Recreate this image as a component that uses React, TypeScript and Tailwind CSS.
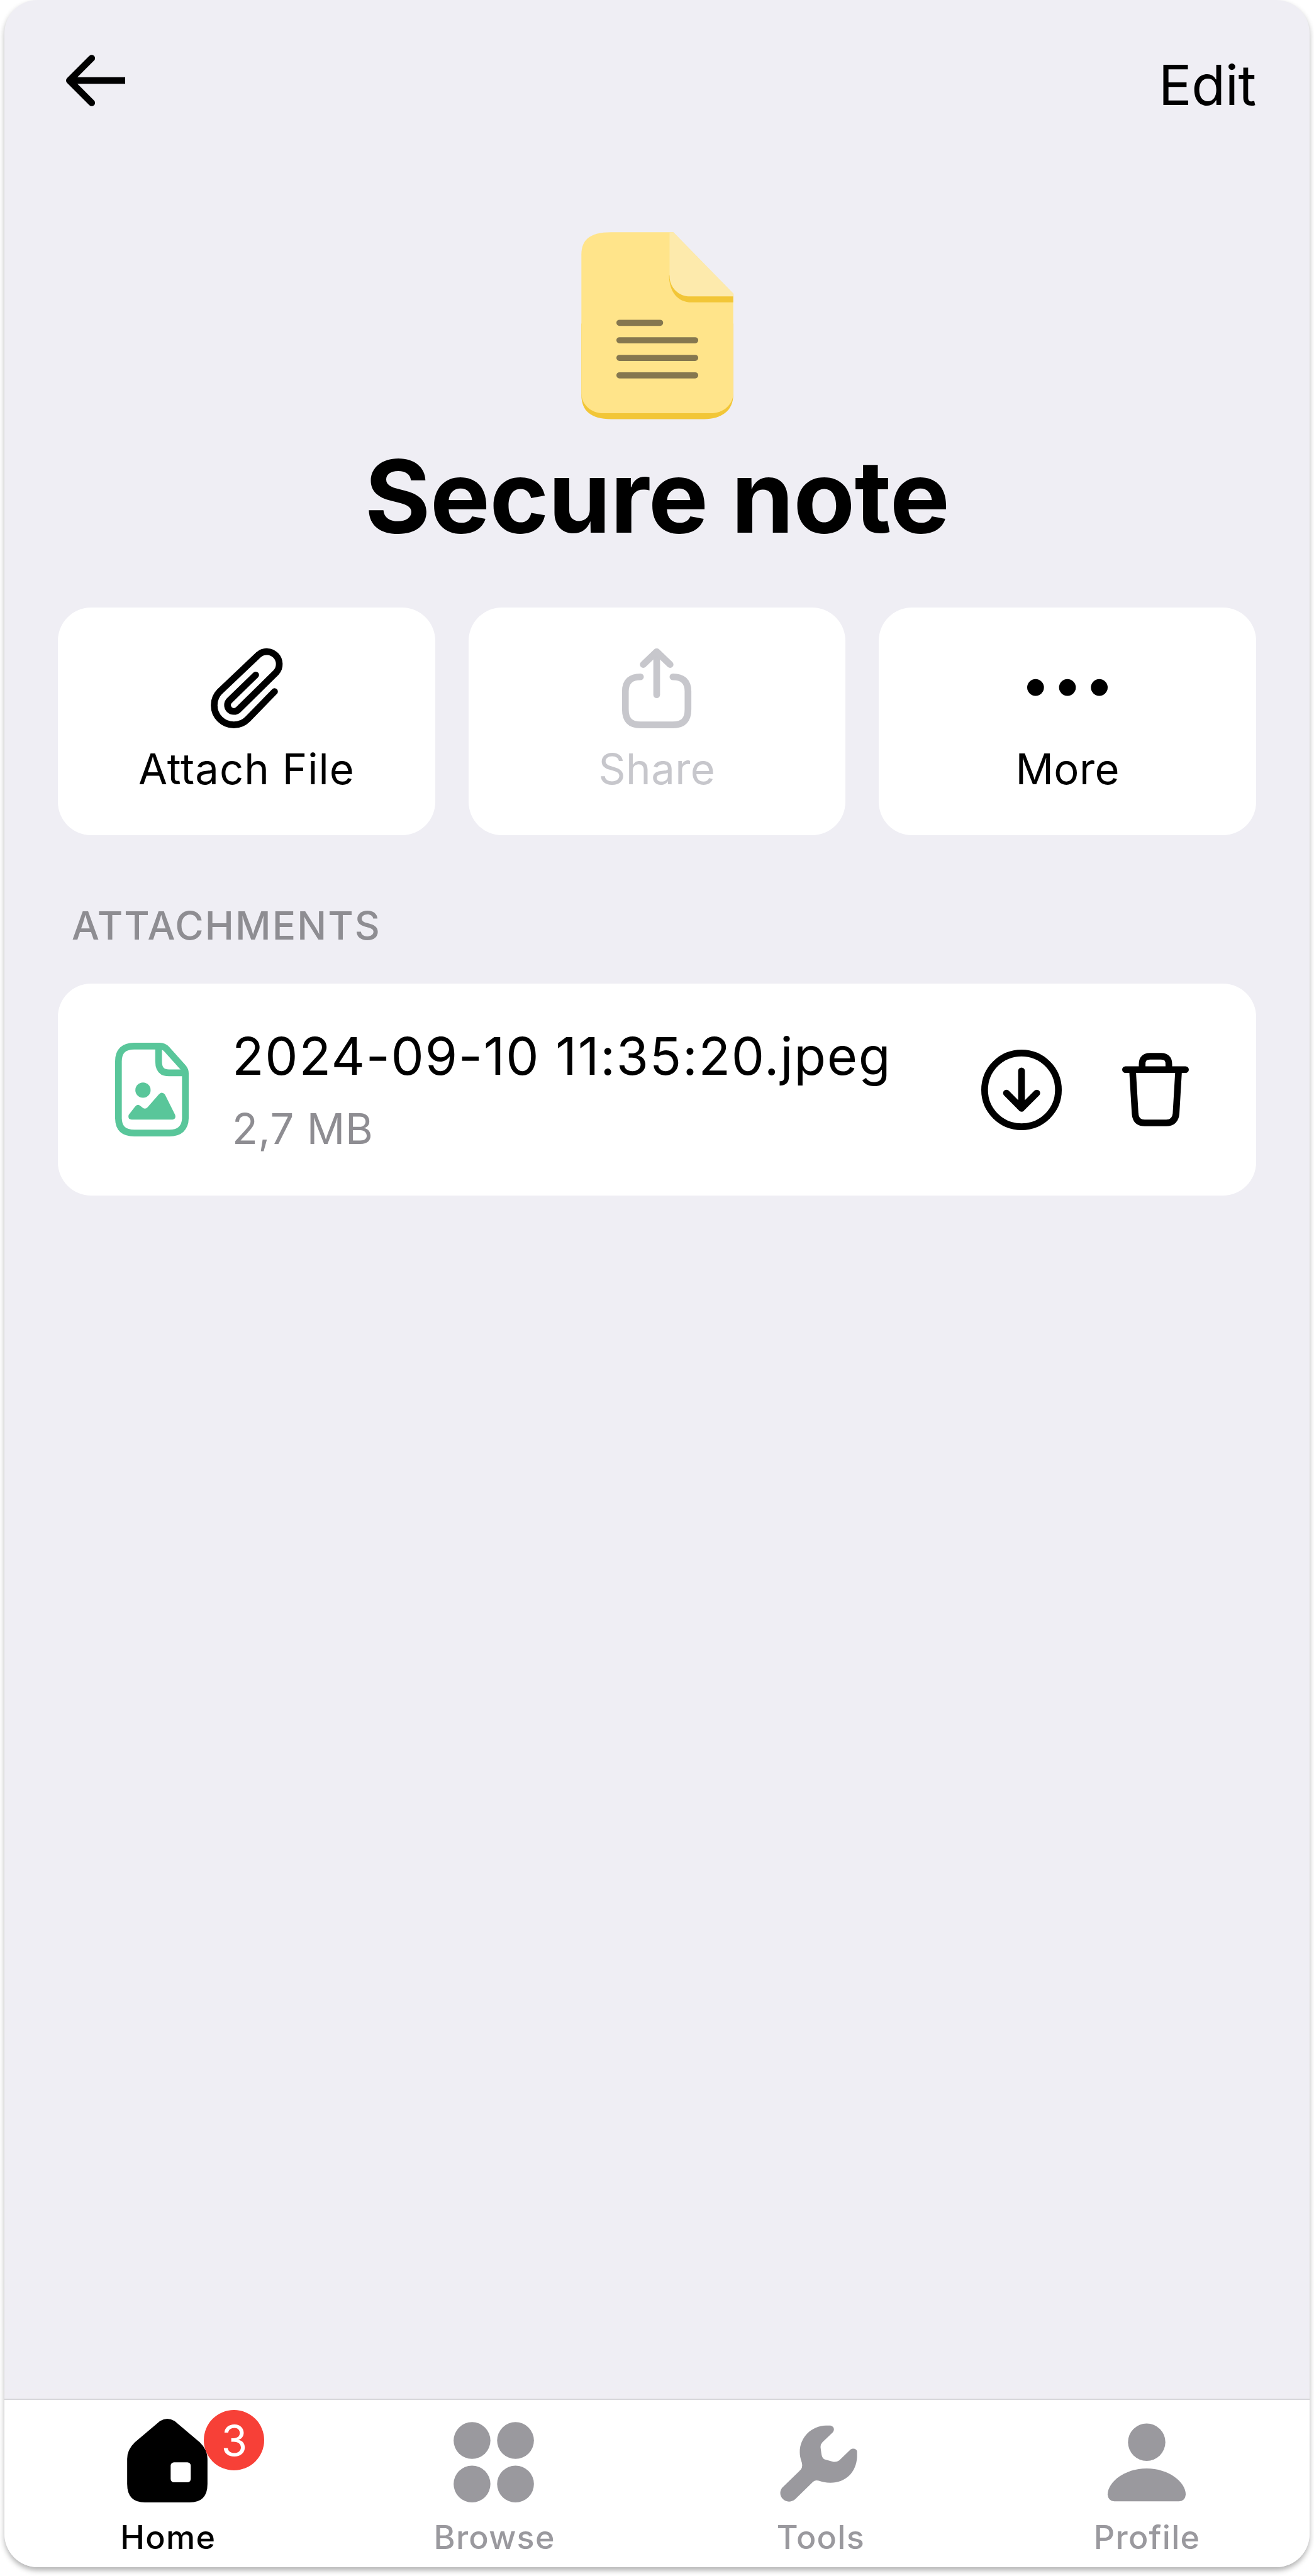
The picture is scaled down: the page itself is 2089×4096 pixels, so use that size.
import React from 'react';

type IconProps = { className?: string };

function ArrowLeft({ className }: IconProps) {
  return (
    <svg viewBox="118 98 106 92" className={className} fill="none" stroke="currentColor" strokeWidth="12" strokeLinecap="round" strokeLinejoin="round">
      <path d="M164 104L124 144L164 184" />
      <path d="M126 144H224" strokeLinecap="butt" />
    </svg>
  );
}

function NoteIcon({ className }: IconProps) {
  return (
    <svg viewBox="124 108 820 1008" className={className}>
      <path d="M125 600V985C125 1070 175 1115 285 1115H785C880 1115 943 1070 943 985V600Z" fill="#f2c637" />
      <path d="M125 228C125 150 170 108 285 108H620L943 438V975C943 1035 892 1083 820 1083H245C175 1083 125 1035 125 975Z" fill="#ffe48a" />
      <path d="M597 340C598 425 640 486 720 486H943V440Z" fill="#f2c637" />
      <path d="M600 108H620L943 438V454H710C648 454 600 405 600 345Z" fill="#fdeaac" />
      <path d="M330 596H549M330 690H738M330 785H738M330 879H738" stroke="#85774f" strokeWidth="33" strokeLinecap="round" />
    </svg>
  );
}

function PaperclipIcon({ className }: IconProps) {
  return (
    <svg viewBox="57 66 432 432" className={className} fill="none" stroke="currentColor" strokeWidth="36" strokeLinecap="round" strokeLinejoin="round">
      <path d="M423 301L279 449A105 105 0 0 1 130 300L338 103A67 67 0 0 1 432 198L229 398A34 34 0 0 1 181 349L322 212" />
    </svg>
  );
}

function ShareIcon({ className }: IconProps) {
  return (
    <svg viewBox="1106 1162 144 144" className={className} fill="none" stroke="currentColor" strokeWidth="12" strokeLinecap="round" strokeLinejoin="round">
      <path d="M1178 1172V1246" />
      <path d="M1154 1192L1178 1169L1202 1192" />
      <path d="M1149 1214C1132 1214 1122 1222 1122 1240V1272C1122 1292 1131 1300 1149 1300H1207C1225 1300 1234 1292 1234 1272V1240C1234 1222 1224 1214 1207 1214" />
    </svg>
  );
}

function DotsIcon({ className }: IconProps) {
  return (
    <svg viewBox="0 0 144 144" className={className} fill="currentColor">
      <circle cx="15" cy="71" r="15" />
      <circle cx="72" cy="71" r="15" />
      <circle cx="129" cy="71" r="15" />
    </svg>
  );
}

function ImageFileIcon({ className }: IconProps) {
  return (
    <svg viewBox="48 60 396 504" className={className}>
      <g fill="none" stroke="currentColor" strokeWidth="36" strokeLinejoin="round">
        <path d="M66 160C66 105 95 78 150 78H288C306 78 316 84 326 95L413 192C422 202 426 210 426 224V464C426 520 394 546 340 546H152C95 546 66 520 66 464Z" />
        <path d="M282 80V160C282 202 300 222 338 222H426" />
      </g>
      <g fill="currentColor">
        <circle cx="198" cy="315" r="41" />
        <path d="M121 448L155 404Q169 386 184 400L198 411Q211 420 223 407L283 338Q300 320 316 338L371 448Q377 470 357 474H137Q115 472 121 448Z" />
      </g>
    </svg>
  );
}

function DownloadIcon({ className }: IconProps) {
  return (
    <svg viewBox="30 66 432 432" className={className} fill="none" stroke="currentColor" strokeWidth="36" strokeLinecap="round" strokeLinejoin="round">
      <circle cx="246" cy="282" r="198" />
      <path d="M246 180V376M165 299L246 381L328 299" />
    </svg>
  );
}

function TrashIcon({ className }: IconProps) {
  return (
    <svg viewBox="786 84 360 396" className={className} fill="none" stroke="currentColor" strokeWidth="36" strokeLinecap="round" strokeLinejoin="round">
      <path d="M804 174H1128" />
      <path d="M894 172V145C894 116 908 102 936 102H996C1024 102 1038 116 1038 145V172" />
      <path d="M842 176L856 412C859 445 876 462 908 462H1024C1056 462 1074 445 1077 412L1091 176" />
    </svg>
  );
}

function HomeIcon({ className }: IconProps) {
  return (
    <svg viewBox="228 4338 144 150" className={className}>
      <path d="M287 4342Q300 4334 313 4342L358 4380Q372 4393 372 4410V4455Q372 4488 340 4488H260Q228 4488 228 4455V4410Q228 4393 242 4380Z" fill="currentColor" />
      <rect x="306" y="4416" width="36" height="36" rx="6" fill="#fff" />
    </svg>
  );
}

function BrowseIcon({ className }: IconProps) {
  return (
    <svg viewBox="814 4338 144 150" className={className} fill="currentColor">
      <circle cx="847" cy="4377" r="33" />
      <circle cx="925" cy="4377" r="33" />
      <circle cx="847" cy="4455" r="33" />
      <circle cx="925" cy="4455" r="33" />
    </svg>
  );
}

function ToolsIcon({ className }: IconProps) {
  return (
    <svg viewBox="54 54 432 450" className={className} fill="currentColor">
      <path d="M300 90H325C345 94 349 114 337 128L282 180Q270 192 272 210L276 240Q279 266 293 272L335 284Q355 290 372 278L430 222C446 209 466 216 468 230V260C464 340 408 398 325 398C300 398 280 393 262 387Q245 382 232 392L135 487C88 525 32 470 65 425L165 328Q177 315 171 290C163 268 160 250 160 235C160 150 225 92 300 90Z" />
    </svg>
  );
}

function ProfileIcon({ className }: IconProps) {
  return (
    <svg viewBox="1984 4338 144 150" className={className} fill="currentColor">
      <circle cx="2056" cy="4380" r="33.5" />
      <path d="M2056 4427C2095 4427 2126 4451 2126 4474Q2125 4486 2114 4486H1998Q1987 4486 1986 4474C1986 4451 2017 4427 2056 4427Z" />
    </svg>
  );
}

const actions = [
  { label: 'Attach File', Icon: PaperclipIcon, color: 'text-black', tracking: 'tracking-[1px]' },
  { label: 'Share', Icon: ShareIcon, color: 'text-[#c7c7cc]', tracking: 'tracking-[0.5px]' },
  { label: 'More', Icon: DotsIcon, color: 'text-black', tracking: 'tracking-[0.4px]' },
];

const tabs = [
  { label: 'Home', Icon: HomeIcon, color: 'text-black', badge: 3 },
  { label: 'Browse', Icon: BrowseIcon, color: 'text-[#9a999e]' },
  { label: 'Tools', Icon: ToolsIcon, color: 'text-[#9a999e]' },
  { label: 'Profile', Icon: ProfileIcon, color: 'text-[#9a999e]' },
];

export default function App() {
  return (
    <div className="h-[4096px] w-[2089px] overflow-hidden bg-white px-[7px] font-['Inter',sans-serif] text-black">
      <div className="flex h-[4082px] w-full flex-col rounded-[53px] bg-[#efeef4] shadow-[0_5px_8px_rgba(0,0,0,0.3)]">
        <main className="flex flex-1 flex-col px-[85px]">
          <header className="flex h-[369px] items-start justify-between pt-[87px]">
            <button className="ml-[13px]" aria-label="Back">
              <ArrowLeft className="h-[82px] w-[94px]" />
            </button>
            <button className="mt-[4px] text-[88px] leading-[88px] tracking-[-0.4px]">Edit</button>
          </header>

          <NoteIcon className="h-[298px] w-[242px] self-center" />
          <h1 className="mt-[40px] text-center text-[160px] leading-[165px] font-bold tracking-[-0.8px]">Secure note</h1>

          <div className="mt-[94px] grid grid-cols-3 gap-[53px]">
            {actions.map(({ label, Icon, color, tracking }) => (
              <button key={label} className={`flex h-[362px] flex-col items-center rounded-[53px] bg-white pt-[64px] ${color}`}>
                <Icon className="size-[128px]" />
                <span className={`mt-[31px] text-[67px] leading-[67px] ${tracking}`}>{label}</span>
              </button>
            ))}
          </div>

          <h2 className="mt-[113px] pl-[22px] text-[62px] leading-[62px] font-medium tracking-[2.1px] text-[#8e8d92]">ATTACHMENTS</h2>

          <div className="mt-[61px] flex h-[337px] items-center rounded-[53px] bg-white pr-[107px] pl-[91px]">
            <ImageFileIcon className="h-[149px] w-[117px] text-[#59c69a]" />
            <div className="ml-[69px] flex flex-1 flex-col gap-[41px]">
              <p className="text-[83px] leading-[82px] whitespace-nowrap tracking-[1.7px]">2024-09-10 11:35:20.jpeg</p>
              <p className="text-[67px] leading-[67px] tracking-[0.7px] text-[#8e8d92]">2,7 MB</p>
            </div>
            <button aria-label="Download">
              <DownloadIcon className="size-[128px]" />
            </button>
            <button className="ml-[96px]" aria-label="Delete">
              <TrashIcon className="h-[117px] w-[106px]" />
            </button>
          </div>
        </main>

        {/* bottom tab bar */}
        <nav className="grid h-[268px] grid-cols-4 rounded-b-[53px] border-t-2 border-[#d6d6da] bg-white pt-[30px]">
          {tabs.map(({ label, Icon, color, badge }) => (
            <a key={label} className={`flex flex-col items-center ${color}`}>
              <div className="relative">
                <Icon className="h-[133px] w-[128px]" />
                {badge && (
                  <span className="absolute -top-[14px] left-[122px] flex size-[96px] items-center justify-center rounded-full bg-[#f74037] text-[67px] leading-[67px] text-white">
                    {badge}
                  </span>
                )}
              </div>
              <span className="mt-[30px] ml-[2px] text-[52px] leading-[52px] font-medium tracking-[1.3px]">{label}</span>
            </a>
          ))}
        </nav>
      </div>
    </div>
  );
}
